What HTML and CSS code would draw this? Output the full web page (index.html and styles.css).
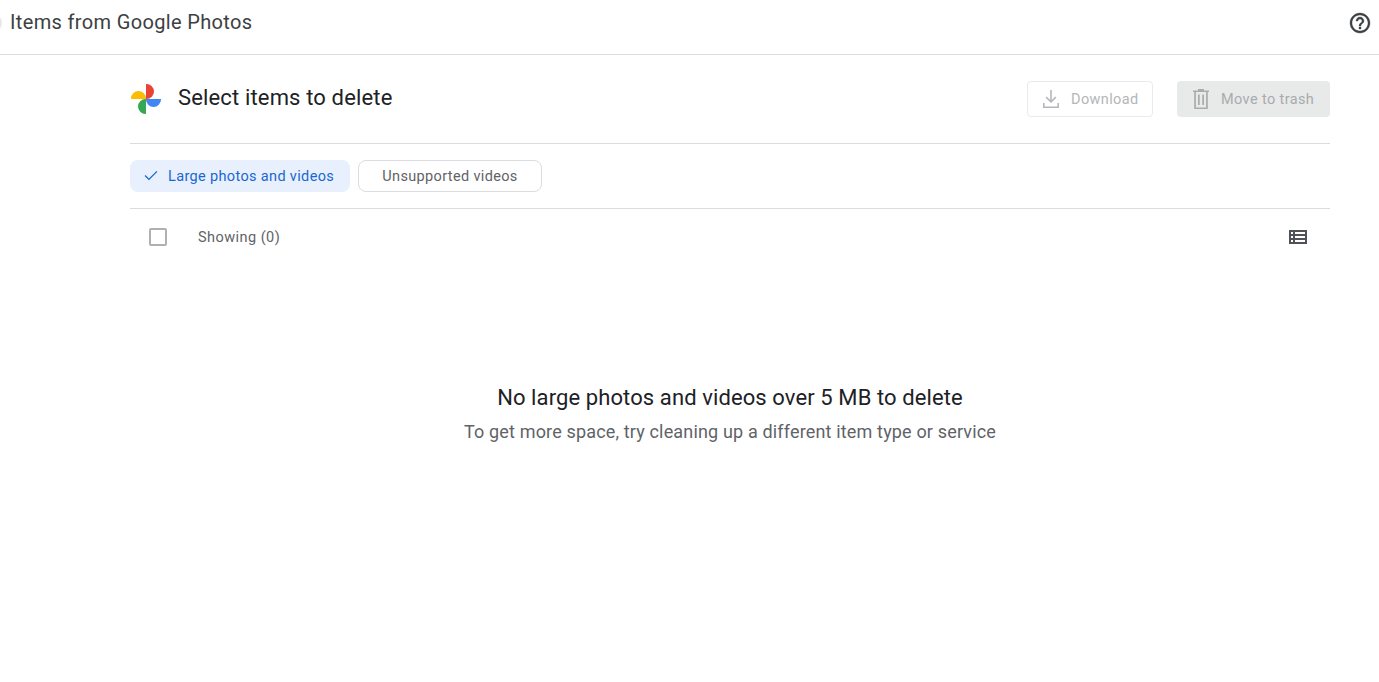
FILE: index.html
```html
<!DOCTYPE html>
<html lang="en">
<head>
<meta charset="utf-8">
<title>Items from Google Photos</title>
<link rel="stylesheet" href="styles.css">
</head>
<body>
<header class="topbar">
  <span class="back-edge"></span>
  <h1 class="topbar-title">Items from Google Photos</h1>
  <svg class="help" viewBox="0 0 24 24" width="24" height="24"><path fill="#3c4043" stroke="#3c4043" stroke-width=".35" d="M11 18h2v-2h-2v2zm1-16C6.48 2 2 6.48 2 12s4.48 10 10 10 10-4.48 10-10S17.52 2 12 2zm0 18c-4.41 0-8-3.59-8-8s3.59-8 8-8 8 3.59 8 8-3.59 8-8 8zm0-14c-2.21 0-4 1.79-4 4h2c0-1.1.9-2 2-2s2 .9 2 2c0 2-3 1.75-3 5h2c0-2.25 3-2.5 3-5 0-2.21-1.79-4-4-4z"/></svg>
</header>
<main class="content">
  <section class="head">
    <svg class="logo" viewBox="0 0 32 32" width="32" height="32">
      <path fill="#fbbc04" d="M1 16h15V15.500A7.500 7.500 0 0 0 8.500 8 7.500 7.500 0 0 0 1 15.500z"/>
      <path fill="#ea4335" d="M16 1v15h.5A7.500 7.500 0 0 0 24 8.500 7.500 7.500 0 0 0 16.500 1z"/>
      <path fill="#4285f4" d="M31 16H16v.5a7.500 7.500 0 0 0 7.500 7.500 7.500 7.500 0 0 0 7.500-7.500z"/>
      <path fill="#34a853" d="M16 31V16h-.5A7.500 7.500 0 0 0 8 23.500 7.500 7.500 0 0 0 15.500 31z"/>
    </svg>
    <h2 class="head-title">Select items to delete</h2>
    <div class="actions">
      <button class="btn btn-outline">
        <svg viewBox="0 0 24 24" width="24" height="24"><path fill="#b4b6b8" d="M12 16 6.700 10.700l1.100-1.100 3.400 3.400V3h1.600v10l3.400-3.400 1.100 1.100zM4 21v-5h1.600v3.400h12.800V16H20v5z"/></svg>
        <span class="label">Download</span>
      </button>
      <button class="btn btn-filled">
        <svg viewBox="0 0 24 24" width="24" height="24"><path fill="#a9abad" d="M9 2h6v1.500h5V5h-1.200v17H5.200V5H4V3.500h5zM6.900 5v15.400h10.200V5zM9 7.500h1.700v10.400H9zm4.300 0H15v10.400h-1.700z"/></svg>
        <span class="label">Move to trash</span>
      </button>
    </div>
  </section>
  <nav class="chips">
    <button class="chip chip-on">
      <svg viewBox="0 0 24 24" width="20" height="20"><path fill="#1967d2" d="M9.500 17.200 4.300 12l1.100-1.100 4.100 4.100 9.100-9.100 1.100 1.100z"/></svg>
      <span class="label">Large photos and videos</span>
    </button>
    <button class="chip chip-off"><span class="label">Unsupported videos</span></button>
  </nav>
  <section class="list-bar">
    <span class="checkbox"></span>
    <span class="showing">Showing (0)</span>
    <svg class="view" viewBox="0 0 18 14" width="18" height="14"><path fill="#4f5357" fill-rule="evenodd" d="M0 0h18v14H0zM2 2v2h2V2zm4 0v2h10V2zM2 6v2h2V6zm4 0v2h10V6zm-4 4v2h2v-2zm4 0v2h10v-2z"/></svg>
  </section>
  <section class="empty">
    <h3 class="empty-title">No large photos and videos over 5 MB to delete</h3>
    <p class="empty-sub">To get more space, try cleaning up a different item type or service</p>
  </section>
</main>
</body>
</html>
```
FILE: styles.css
```css
* { box-sizing: border-box; }
html, body { margin: 0; height: 100%; background: #fff; overflow: hidden; }
body { font-family: Roboto, "Liberation Sans", sans-serif; color: #202124; }
h1, h2, h3, p { margin: 0; font-weight: 400; }

.topbar {
  height: 55px;
  display: flex;
  align-items: center;
  padding: 0 7px 11px 10px;
  border-bottom: 1px solid #dadce0;
  position: relative;
}
.back-edge {
  position: absolute;
  left: -18px;
  top: 13px;
  width: 20px;
  height: 20px;
  border-radius: 50%;
  background: #e8e8e8;
}
.topbar-title { font-size: 20px; line-height: 28px; color: #3c4043; flex: 1; letter-spacing: .35px; }
.help { display: block; margin-top: 2px; }

.content { margin: 0 49px 0 130px; }

.head {
  height: 89px;
  display: flex;
  align-items: flex-start;
  border-bottom: 1px solid #dadce0;
}
.logo { margin: 28px 0 0 0; flex: none; }
.head-title { font-size: 22px; line-height: 28px; margin: 29px 0 0 16px; flex: 1; letter-spacing: .15px; }
.actions { display: flex; gap: 24px; margin-top: 26px; }
.btn {
  height: 36px;
  display: flex;
  align-items: center;
  border-radius: 4px;
  font: 400 14.5px/20px Roboto, "Liberation Sans", sans-serif;
  letter-spacing: .38px;
  color: #b4b6b8;
  background: #fff;
  padding: 0;
}
.label { padding-top: 2px; }
.btn-outline { width: 126px; border: 1px solid #e8eaed; padding-left: 11px; gap: 8px; }
.btn-filled { width: 153px; border: 0; background: #e8eaea; padding-left: 12px; gap: 8px; color: #a9abad; }

.chips {
  height: 65px;
  display: flex;
  gap: 8px;
  padding-top: 16px;
  border-bottom: 1px solid #dadce0;
}
.chip {
  height: 32px;
  display: flex;
  align-items: center;
  border-radius: 8px;
  font: 400 14.5px/20px Roboto, "Liberation Sans", sans-serif;
  letter-spacing: .35px;
  padding: 0;
}
.chip-on { width: 220px; background: #e8f0fe; color: #1967d2; border: 0; padding-left: 11px; gap: 7px; }
.chip-off { width: 184px; background: #fff; color: #5f6368; border: 1px solid #dadce0; justify-content: center; }

.list-bar {
  height: 56px;
  display: flex;
  align-items: center;
  padding: 0 23px 0 19px;
}
.checkbox { width: 18px; height: 18px; border: 2px solid #b0b0b0; border-radius: 2px; flex: none; }
.showing { font-size: 14.5px; letter-spacing: .45px; color: #5f6368; margin-left: 31px; flex: 1; }

.empty { margin-top: 119px; text-align: center; }
.empty-title { font-size: 22px; line-height: 28px; letter-spacing: .1px; }
.empty-sub { font-size: 18px; line-height: 24px; color: #5f6368; margin-top: 8px; letter-spacing: .16px; }
```
